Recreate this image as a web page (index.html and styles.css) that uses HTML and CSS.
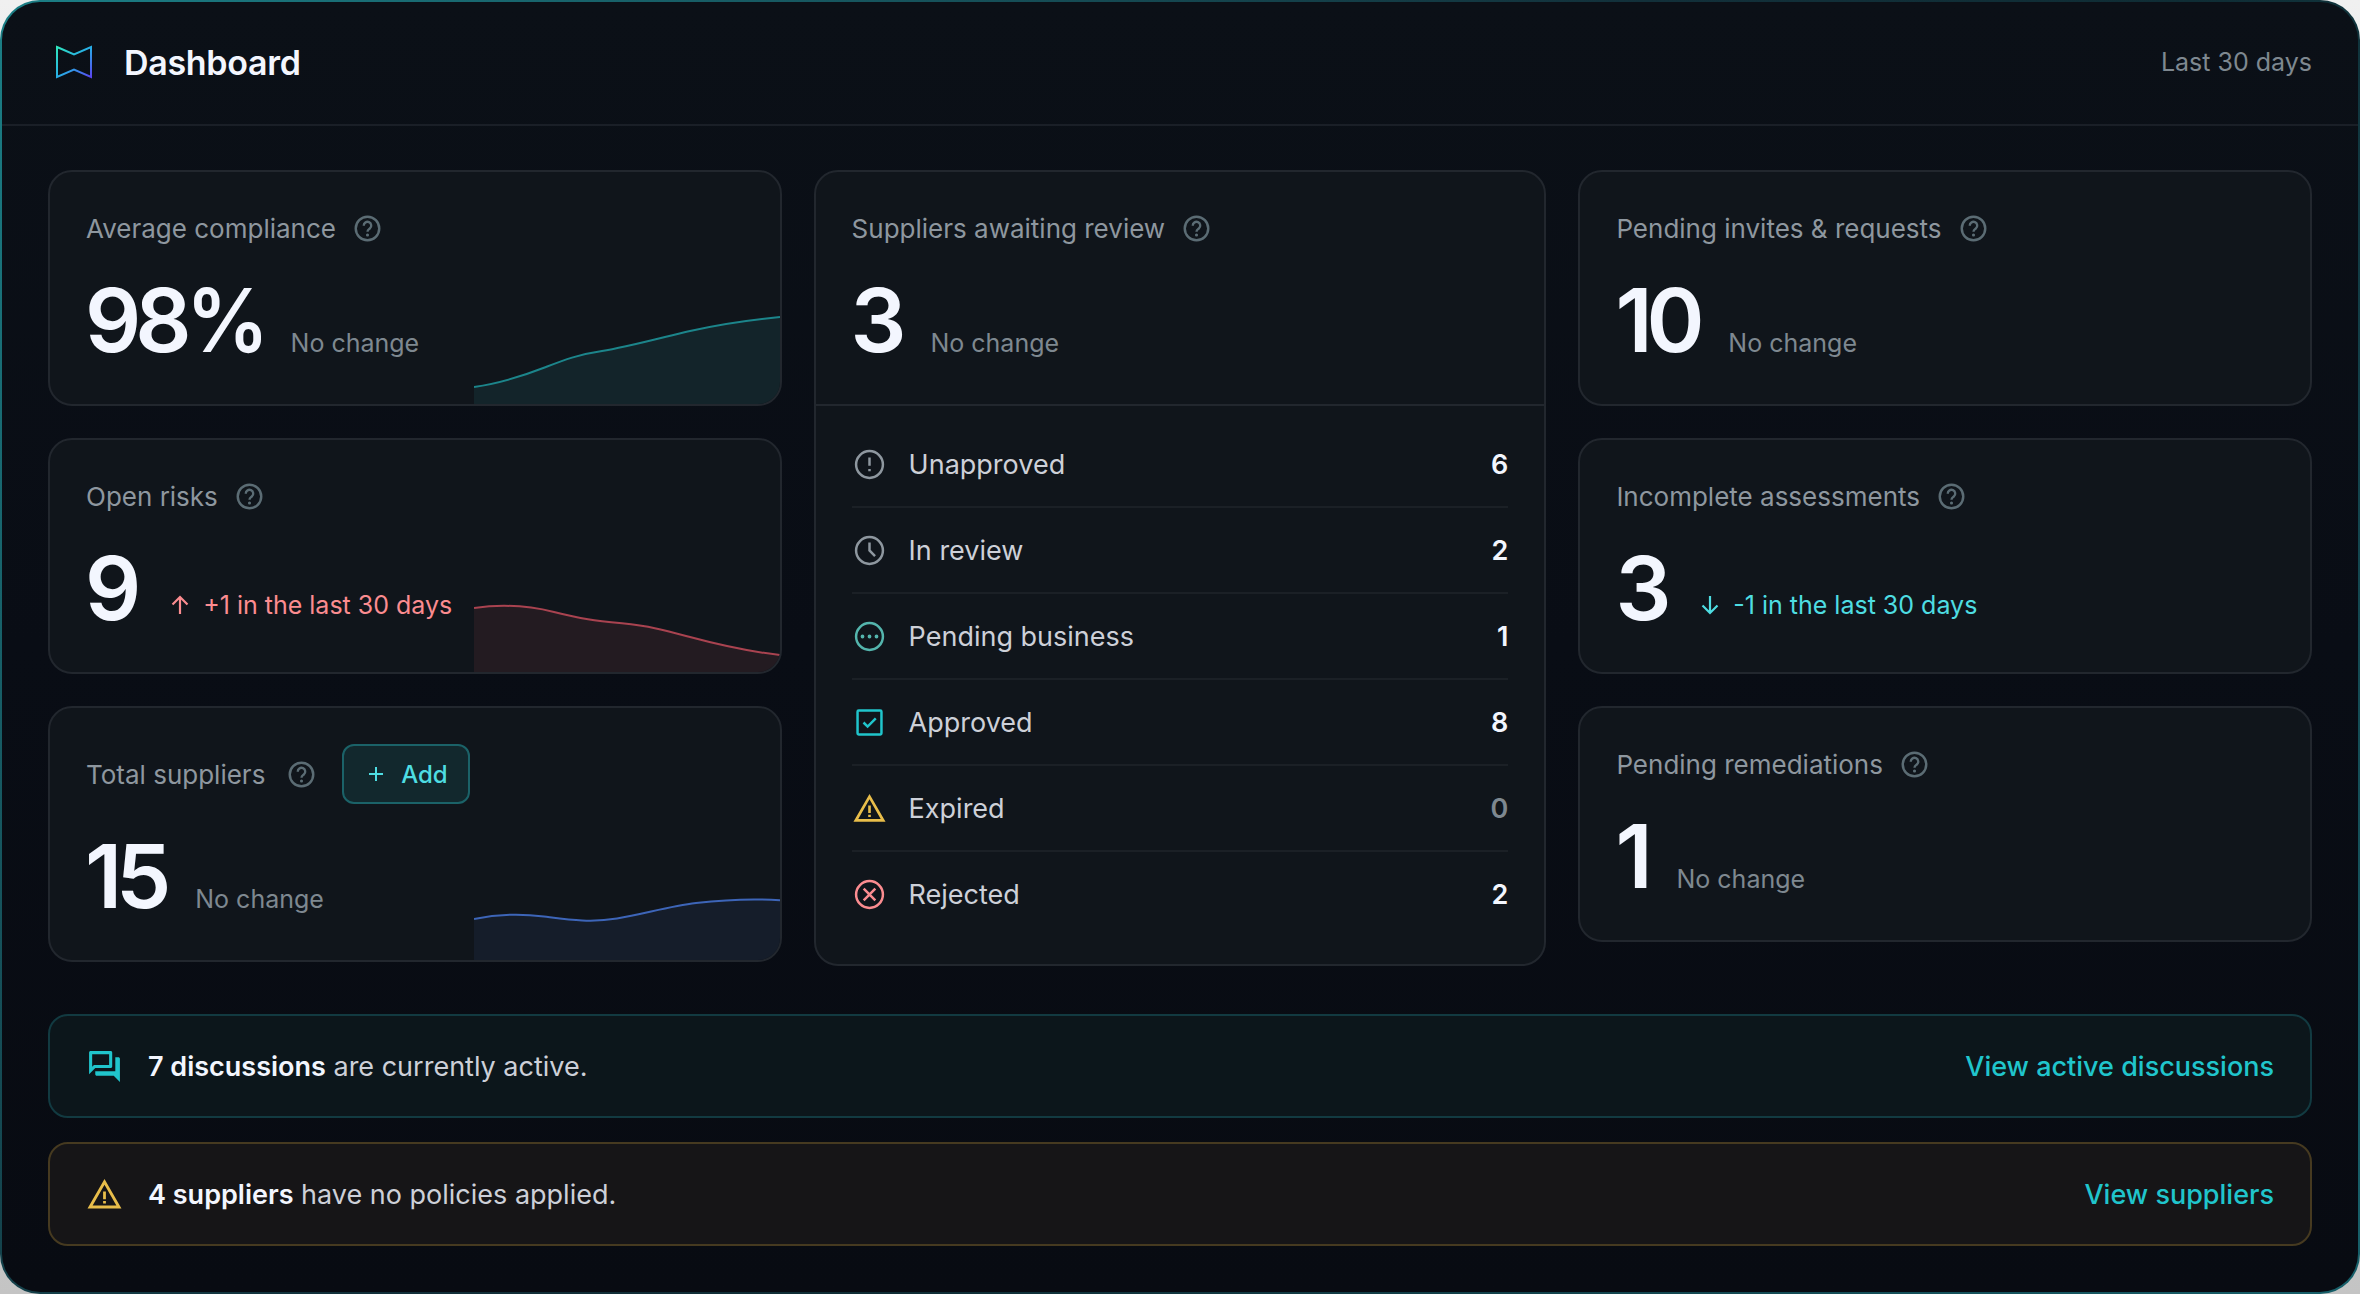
FILE: index.html
```html
<!DOCTYPE html>
<html lang="en">
<head>
  <meta charset="UTF-8" />
  <title>Dashboard</title>
  <link rel="stylesheet" href="styles.css">
</head>
<body>
  <!-- shared icons -->
  <svg class="sprite" width="0" height="0">
    <symbol id="help" viewBox="0 0 24 24">
      <circle cx="12" cy="12" r="9.1" fill="none" stroke="currentColor" stroke-width="1.9" />
      <path d="M9.1 9.9a2.9 2.9 0 1 1 4.7 2.1c-1 .8-1.8 1.200-1.800 2.500" fill="none" stroke="currentColor" stroke-width="1.8" />
      <circle cx="12" cy="17" r="1.2" fill="currentColor" />
    </symbol>
    <symbol id="warning" viewBox="0 0 24 24">
      <path d="M12 2 1 21h22L12 2zm0 3.700L19.700 19.200H4.300L12 5.700z" fill="currentColor" />
      <path d="M11.100 10h1.800v5h-1.800zM11.100 16.200h1.800v1.700h-1.800z" fill="currentColor" />
    </symbol>
  </svg>

  <div class="window">
    <header class="header">
      <svg class="logo" viewBox="0 0 40 36">
        <defs>
          <linearGradient id="logoGradient" x1="0" y1="0" x2="1" y2="1">
            <stop offset="0" stop-color="#2fe6bd" />
            <stop offset="0.5" stop-color="#27aee6" />
            <stop offset="1" stop-color="#5a45f0" />
          </linearGradient>
        </defs>
        <path d="M3 3 20 10.500 37 3V33L20 25.500 3 33Z" fill="none" stroke="url(#logoGradient)" stroke-width="2" />
      </svg>
      <h1 class="title">Dashboard</h1>
      <span class="period">Last 30 days</span>
    </header>

    <main class="content">
      <div class="columns">
        <!-- left column -->
        <div class="column">
          <section class="card">
            <div class="card-header">Average compliance <svg class="help"><use href="#help" /></svg></div>
            <div class="card-value"><span class="number">98<span class="percent">%</span></span><span class="change">No change</span></div>
            <svg class="chart teal" viewBox="0 0 306 90">
              <path class="area" d="M0 73C28 69 54 60 72 53S104 40.500 128 37S190 23 216 17S280 5.500 306 3V90H0Z" />
              <path class="line" d="M0 73C28 69 54 60 72 53S104 40.500 128 37S190 23 216 17S280 5.500 306 3" />
            </svg>
          </section>

          <section class="card">
            <div class="card-header">Open risks <svg class="help"><use href="#help" /></svg></div>
            <div class="card-value">
              <span class="number">9</span>
              <span class="trend up">
                <svg class="arrow" viewBox="0 0 18 20"><path d="M9 19V2M1.500 9.500 9 2l7.500 7.500" /></svg>+1 in the last 30 days
              </span>
            </div>
            <svg class="chart red" viewBox="0 0 306 90">
              <path class="area" d="M0 26C28 22 52 23 80 30S120 38.500 148 41.300S190 48 216 55S275 69.500 306 73V90H0Z" />
              <path class="line" d="M0 26C28 22 52 23 80 30S120 38.500 148 41.300S190 48 216 55S275 69.500 306 73" />
            </svg>
          </section>

          <section class="card">
            <div class="card-header wide">
              Total suppliers <svg class="help"><use href="#help" /></svg>
              <button class="add-btn"><svg class="plus" viewBox="0 0 16 16"><path d="M8 1v14M1 8h14" /></svg>Add</button>
            </div>
            <div class="card-value"><span class="number">15</span><span class="change">No change</span></div>
            <svg class="chart blue" viewBox="0 0 306 90">
              <path class="area" d="M0 49C24 44 46 43.500 70 46.500S116 53 143 48.500S196 36 222 33S280 28.500 306 30.300V90H0Z" />
              <path class="line" d="M0 49C24 44 46 43.500 70 46.500S116 53 143 48.500S196 36 222 33S280 28.500 306 30.300" />
            </svg>
          </section>
        </div>

        <!-- review status -->
        <section class="card review">
          <div class="review-top">
            <div class="card-header">Suppliers awaiting review <svg class="help"><use href="#help" /></svg></div>
            <div class="card-value"><span class="number">3</span><span class="change">No change</span></div>
          </div>
          <ul class="status-list">
            <li class="status">
              <svg class="status-icon grey" viewBox="0 0 24 24"><circle cx="12" cy="12" r="9.200" /><path d="M12 7.200v5.600M12 15v1.700" /></svg>
              <span>Unapproved</span><b class="count">6</b>
            </li>
            <li class="status">
              <svg class="status-icon grey" viewBox="0 0 24 24"><circle cx="12" cy="12" r="9.200" /><path d="M12 6.500V12l3.800 3.800" /></svg>
              <span>In review</span><b class="count">2</b>
            </li>
            <li class="status">
              <svg class="status-icon green" viewBox="0 0 24 24"><circle cx="12" cy="12" r="9.200" /><path class="dots" d="M7.200 12h0M12 12h0M16.800 12h0" /></svg>
              <span>Pending business</span><b class="count">1</b>
            </li>
            <li class="status">
              <svg class="status-icon cyan" viewBox="0 0 24 24"><rect x="3.800" y="3.800" width="16.400" height="16.400" rx="0.800" /><path d="m7.900 12 2.800 2.800 5.600-5.600" /></svg>
              <span>Approved</span><b class="count">8</b>
            </li>
            <li class="status">
              <svg class="warning-icon"><use href="#warning" /></svg>
              <span>Expired</span><b class="count zero">0</b>
            </li>
            <li class="status">
              <svg class="status-icon pink" viewBox="0 0 24 24"><circle cx="12" cy="12" r="9.200" /><path d="m8 8 8 8M16 8l-8 8" /></svg>
              <span>Rejected</span><b class="count">2</b>
            </li>
          </ul>
        </section>

        <!-- right column -->
        <div class="column">
          <section class="card">
            <div class="card-header">Pending invites &amp; requests <svg class="help"><use href="#help" /></svg></div>
            <div class="card-value"><span class="number">10</span><span class="change">No change</span></div>
          </section>

          <section class="card">
            <div class="card-header">Incomplete assessments <svg class="help"><use href="#help" /></svg></div>
            <div class="card-value">
              <span class="number">3</span>
              <span class="trend down">
                <svg class="arrow" viewBox="0 0 18 20"><path d="M9 1v17M1.500 10.500 9 18l7.500-7.500" /></svg>-1 in the last 30 days
              </span>
            </div>
          </section>

          <section class="card">
            <div class="card-header">Pending remediations <svg class="help"><use href="#help" /></svg></div>
            <div class="card-value"><span class="number">1</span><span class="change">No change</span></div>
          </section>
        </div>
      </div>

      <div class="banner info">
        <svg class="banner-icon" viewBox="0 0 24 24">
          <path d="M15 4v7H5.170L4 12.170V4h11m1-2H3c-.55 0-1 .45-1 1v14l4-4h10c.55 0 1-.45 1-1V3c0-.55-.45-1-1-1zm5 4h-2v9H6v2c0 .55.45 1 1 1h11l4 4V7c0-.55-.45-1-1-1z" fill="currentColor" />
        </svg>
        <p><strong>7 discussions</strong> are currently active.</p>
        <a class="link">View active discussions</a>
      </div>
      <div class="banner warn">
        <svg class="banner-icon"><use href="#warning" /></svg>
        <p><strong>4 suppliers</strong> have no policies applied.</p>
        <a class="link">View suppliers</a>
      </div>
    </main>
  </div>
</body>
</html>
```
FILE: styles.css
```css
* {
  box-sizing: border-box;
}
body {
  margin: 0;
  background: linear-gradient(#f0f0f0, #c4c4c4);
  font-family: Inter, "Liberation Sans", sans-serif;
  font-size: 26px;
  color: #8e979f;
}
.sprite {
  position: absolute;
}
.window {
  height: 1294px;
  border: 2px solid transparent;
  border-radius: 40px;
  background:
    linear-gradient(#0b1017, #090d15 50%, #080b12) padding-box,
    linear-gradient(135deg, #1b7f86, #12303a 45%, #0f2d35 60%, #17606a) border-box;
}

/* header */
.header {
  display: flex;
  align-items: center;
  height: 124px;
  padding: 0 46px 2px 52px;
  border-bottom: 2px solid #1a1f27;
}
.logo {
  width: 40px;
  height: 36px;
}
.title {
  margin: 0 0 0 30px;
  font-size: 34px;
  font-weight: 600;
  letter-spacing: -0.3px;
  color: #f3f6fe;
}
.period {
  margin-left: auto;
  font-size: 25px;
  color: #7e8890;
}

.content {
  padding: 44px 46px 0;
}
.columns {
  display: grid;
  grid-template-columns: 733.6px 732.8px 733.6px;
  gap: 32px;
  align-items: start;
}
.column {
  display: grid;
  gap: 32px;
}

/* cards */
.card {
  position: relative;
  overflow: hidden;
  padding: 36px;
  border: 2px solid #22272e;
  border-radius: 24px;
  background: #10151b;
}
.card-header {
  display: flex;
  align-items: center;
  gap: 16px;
  height: 40px;
}
.card-header.wide {
  height: 60px;
  gap: 21px;
}
.help {
  width: 31px;
  height: 31px;
  color: #5b6c74;
}
.card-value {
  display: flex;
  align-items: baseline;
  height: 96px;
  margin-top: 24px;
}
.number {
  margin-left: -1px;
  font-size: 88px;
  line-height: 96px;
  font-weight: 600;
  letter-spacing: -0.07em;
  color: #f3f6fe;
}
.percent {
  display: inline-block;
  margin: 0 -8px 0 1px;
  transform: scaleX(0.94);
  transform-origin: left;
}
.change {
  margin-left: 30px;
  font-size: 25px;
  color: #7e8890;
}
.trend {
  align-self: flex-start;
  display: flex;
  align-items: center;
  margin: 49px 0 0 36px;
  font-size: 25px;
  line-height: 32px;
}
.arrow {
  width: 18px;
  height: 20px;
  margin-right: 14px;
  fill: none;
  stroke: currentColor;
  stroke-width: 2.200;
}
.up {
  color: #fb8c90;
}
.down {
  color: #4edde2;
}
.add-btn {
  display: flex;
  align-items: center;
  justify-content: center;
  gap: 17px;
  width: 128px;
  height: 60px;
  margin-left: 4px;
  padding: 0 0 0 3px;
  border: 2px solid #1b6268;
  border-radius: 12px;
  background: #12282d;
  font: 500 24px Inter, sans-serif;
  color: #4edde2;
}
.plus {
  width: 16px;
  height: 16px;
  stroke: currentColor;
  stroke-width: 2;
}

/* sparklines in the card corner */
.chart {
  position: absolute;
  right: 0;
  bottom: 0;
  width: 306px;
  height: 90px;
}
.line {
  fill: none;
  stroke-width: 2;
}
.teal .line { stroke: #1c858b; }
.teal .area { fill: #13242a; }
.red .line { stroke: #a94350; }
.red .area { fill: #231b21; }
.blue .line { stroke: #3d65b8; }
.blue .area { fill: #151d2a; }

/* review list */
.review {
  padding: 0;
}
.review-top {
  height: 234px;
  padding: 36px;
  border-bottom: 2px solid #22272e;
}
.status-list {
  list-style: none;
  margin: 0;
  padding: 16px 36px 26px;
}
.status {
  display: flex;
  align-items: center;
  height: 86px;
  border-bottom: 2px solid #1b2026;
  font-size: 27px;
  color: #cdd0d8;
}
.status:last-child {
  border-color: transparent;
}
.status-icon,
.warning-icon {
  width: 35px;
  height: 35px;
  margin-right: 22px;
}
.status-icon {
  fill: none;
  stroke: currentColor;
  stroke-width: 1.700;
}
.dots {
  stroke-width: 2.600;
  stroke-linecap: round;
}
.grey { color: #8e979f; }
.green { color: #54b5ad; }
.cyan { color: #20c5cc; }
.pink { color: #fb8c90; }
.warning-icon { color: #e8bd4a; }
.count {
  margin-left: auto;
  font-weight: 600;
  color: #f3f6fe;
}
.zero {
  color: #7e8890;
}

/* banners */
.banner {
  display: flex;
  align-items: center;
  height: 104px;
  margin-top: 48px;
  padding: 0 36px;
  border: 2px solid;
  border-radius: 20px;
  font-size: 27px;
  color: #cdd0d8;
}
.banner + .banner {
  margin-top: 24px;
}
.banner p {
  margin: 0;
}
.banner strong {
  font-weight: 600;
  color: #f3f6fe;
}
.info {
  border-color: #123a41;
  background: #0c161b;
}
.warn {
  border-color: #463a20;
  background: #161517;
}
.banner-icon {
  width: 37px;
  height: 37px;
  margin-right: 25px;
  color: #20c5cc;
}
.warn .banner-icon {
  color: #e8bd4a;
}
.link {
  margin-left: auto;
  font-weight: 500;
  color: #20c5cc;
}
```
